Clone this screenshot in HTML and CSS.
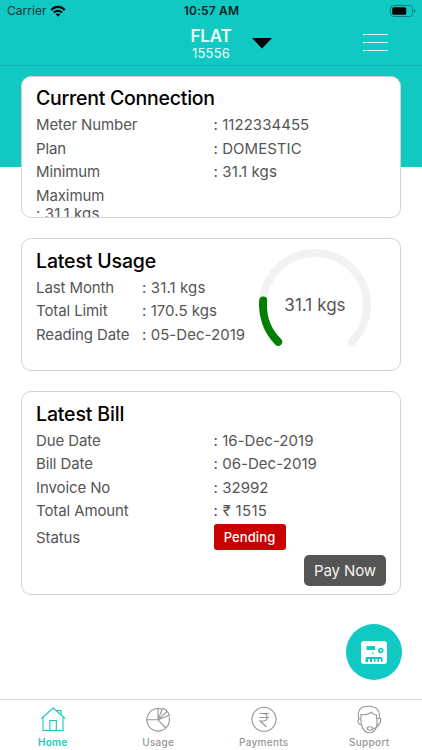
FILE: index.html
```html
<!DOCTYPE html>
<html lang="en">
<head>
<meta charset="utf-8">
<meta name="viewport" content="width=device-width">
<title>Home</title>
<link rel="stylesheet" href="styles.css">
</head>
<body>
<div class="app">
  <header class="header">
    <div class="status-bar">
      <div class="carrier"><span>Carrier</span>
        <svg width="16" height="12" viewBox="0 0 16 12"><path d="M.5 4.2C4.800-.3 11.200-.3 15.500 4.200L14 5.700C10.500 2.200 5.500 2.200 2 5.700ZM3.100 6.800C5.900 4 10.100 4 12.900 6.800L11.300 8.300C9.300 6.500 6.700 6.500 4.700 8.300ZM5.700 9.300C7 8.200 9 8.200 10.300 9.300L8 11.700Z"/></svg>
      </div>
      <span class="clock">10:57 AM</span>
      <svg class="battery" width="26" height="12" viewBox="0 0 26 12"><rect x=".5" y=".5" width="22" height="11" rx="3" fill="none" stroke="#087f7c"/><rect x="2.200" y="2.200" width="14" height="7.600" rx="1.500"/><path d="M24 4q1.300.7 1.300 2T24 8Z" fill="#087f7c"/></svg>
    </div>
    <div class="nav">
      <div class="account"><strong>FLAT</strong><span>15556</span></div>
      <svg class="caret" width="20" height="11" viewBox="0 0 20 11"><path d="M0 0H20L10 10.500Z"/></svg>
      <div class="burger"><i></i><i></i><i></i></div>
    </div>
  </header>
  <main class="content">
    <section class="card connection">
      <h2>Current Connection</h2>
      <dl>
        <div class="row"><dt>Meter Number</dt><dd>: 1122334455</dd></div>
        <div class="row"><dt>Plan</dt><dd>: DOMESTIC</dd></div>
        <div class="row"><dt>Minimum</dt><dd class="kgs">: 31.1 kgs</dd></div>
        <div class="row stacked"><dt>Maximum</dt><dd class="kgs">: 31.1 kgs</dd></div>
      </dl>
    </section>
    <section class="card usage">
      <div>
        <h2>Latest Usage</h2>
        <dl>
          <div class="row"><dt>Last Month</dt><dd class="kgs">: 31.1 kgs</dd></div>
          <div class="row"><dt>Total Limit</dt><dd>: 170.5 kgs</dd></div>
          <div class="row"><dt>Reading Date</dt><dd>: 05-Dec-2019</dd></div>
        </dl>
      </div>
      <div class="gauge">
        <svg width="112" height="112" viewBox="0 0 112 112" fill="none" stroke-width="8" stroke-linecap="round"><path d="M19.200 92.800A52 52 0 1 1 92.800 92.800" stroke="#f2f2f2"/><path d="M19.200 92.800A52 52 0 0 1 4.200 51.500" stroke="#008000"/></svg>
        <span>31.1 kgs</span>
      </div>
    </section>
    <section class="card bill">
      <h2>Latest Bill</h2>
      <dl>
        <div class="row"><dt>Due Date</dt><dd>: 16-Dec-2019</dd></div>
        <div class="row"><dt>Bill Date</dt><dd>: 06-Dec-2019</dd></div>
        <div class="row"><dt>Invoice No</dt><dd>: 32992</dd></div>
        <div class="row"><dt>Total Amount</dt><dd class="rupees">: ₹ 1515</dd></div>
        <div class="row status"><dt>Status</dt><dd class="badge">Pending</dd></div>
      </dl>
      <button class="pay">Pay Now</button>
    </section>
    <button class="fab" aria-label="Meter">
      <svg width="26" height="23" viewBox="0 0 26 23"><rect width="26" height="23" rx="3" fill="#fff"/><path d="M5.500 5h8.500v4H5.500ZM4.500 21v-3.500q0-1.500 1.500-1.500h14q1.500 0 1.500 1.500V21h-1.500v-3h-2V21h-1.500v-3h-2V21h-1.500v-3h-2V21H9v-3H7v3Z" fill="#11c9c3"/><circle cx="12" cy="12.300" r=".8" fill="#11c9c3"/><circle cx="19.800" cy="9.500" r="1.900" fill="none" stroke="#11c9c3" stroke-width="1.600"/></svg>
    </button>
  </main>
  <nav class="tabs">
    <a class="tab active">
      <svg width="28" height="28" viewBox="0 0 28 28"><path d="M4 12.500V25.500H24V12.500M2.500 13.500 14.200 3 26 13.500M18.500 6.500V5.500h3.500v4.500M10.800 25.500V15.500h6.500v10"/></svg>
      <span>Home</span>
    </a>
    <a class="tab">
      <svg width="28" height="28" viewBox="0 0 28 28"><path d="M14 3.500A11.300 11.300 0 1 0 25 11.700M14 3.500V14.800H2.700M14 14.800 21.800 23M14 14.800 18.500 3.500Q21.500 3.500 23 6.500L14 14.800 25.500 10.300Q24.500 7.500 23 6.500M14 3.500Q16.500 3.500 18.200 4.500"/></svg>
      <span>Usage</span>
    </a>
    <a class="tab">
      <svg width="28" height="28" viewBox="0 0 28 28"><circle cx="14" cy="14.300" r="12"/><path d="M9.500 8.500h9.500M9.500 12.500h9.500M9.500 8.500h3.500c5.500 0 5.500 7.500 0 7.500H10l6.500 6"/></svg>
      <span>Payments</span>
    </a>
    <a class="tab">
      <svg width="28" height="28" viewBox="0 0 28 28"><path d="M4 14.500C1.500 5 6 1 13.500 1.200S26 5 24 13.500M6.500 20C9.500 30.500 19.500 30.500 22 20M6 13.500v-4C10 10 14 9.500 16.500 7.200c1 1.500 3 2.300 5 2.800v3.500M5.500 13.500q-3 0-2.500 3T6.500 20ZM22 13.500v6h1.500l2-2v-4ZM24 19.500c-.5 2.800-3 3.500-6 4"/><ellipse cx="15" cy="23.500" rx="2.700" ry="1.700"/></svg>
      <span>Support</span>
    </a>
  </nav>
</div>
</body>
</html>
```
FILE: styles.css
```css
* { box-sizing: border-box; }
body { margin: 0; font-family: Inter, "Liberation Sans", sans-serif; background: #fff; }
h2, dl, dd { margin: 0; }
button { border: 0; padding: 0; font: inherit; }
svg { display: block; flex: none; }
.app { width: 422px; height: 750px; display: flex; flex-direction: column; overflow: hidden; background: linear-gradient(#11c9c3 167px, #fff 167px); }
.header { height: 66px; flex: none; border-bottom: 1px solid #10b5b0; }
.status-bar { height: 22px; display: grid; grid-template-columns: 1fr auto 1fr; align-items: center; padding: 0 6px 0 7px; font-size: 12px; line-height: 22px; color: #073633; }
.carrier { display: flex; gap: 4px; align-items: center; letter-spacing: .02px; }
.carrier svg { fill: #000; margin-top: -1px; }
.clock { font-weight: 600; letter-spacing: .15px; color: #031f1d; }
.battery { justify-self: end; margin-top: -1px; }
.nav { position: relative; height: 43px; display: grid; grid-template-columns: 1fr 62px 1fr; align-items: start; color: #e9fffd; }
.account { grid-column: 2; display: flex; flex-direction: column; align-items: center; padding-top: 4px; }
.account strong { font-size: 17px; font-weight: 600; line-height: 20px; letter-spacing: -.2px; }
.account span { font-size: 13px; line-height: 14px; letter-spacing: .2px; }
.caret { position: absolute; left: 252px; top: 16px; }
.burger { justify-self: end; width: 25px; margin: 12px 34px 0 0; display: flex; flex-direction: column; gap: 7px; }
.burger i { height: 1px; background: #dffaf8; }
.content { position: relative; flex: 1; padding: 10px 21px 0; }
.card { border: 1px solid #d2d2d2; border-radius: 10px; background: #fff; padding: 9px 14px; overflow: hidden; color: #555; font-size: 15px; letter-spacing: -.1px; }
.card h2 { color: #000; font-size: 19.500px; font-weight: 500; line-height: 25px; letter-spacing: -.25px; }
.card dd { letter-spacing: .05px; }
.card dd.kgs { letter-spacing: .12px; }
.card dd.rupees { letter-spacing: .3px; }
.connection { height: 142px; }
.usage { height: 133px; margin-top: 20px; padding-top: 10px; display: flex; justify-content: space-between; }
.bill { height: 204px; margin-top: 20px; padding-top: 10px; display: flex; flex-direction: column; }
.usage h2, .bill h2 { line-height: 24.500px; letter-spacing: -.15px; }
.row { display: grid; grid-template-columns: 177.500px 1fr; height: 23.500px; line-height: 27px; white-space: nowrap; }
.usage .row { grid-template-columns: 106px auto; }
.row.stacked { display: block; }
.row.stacked dd { line-height: 18px; margin-top: -4px; }
.row.status { height: 33px; align-items: center; }
.card .badge { width: 72px; height: 26px; line-height: 26px; text-align: center; border-radius: 3px; background: #c90000; color: #fff; font-size: 13px; font-weight: 500; letter-spacing: .1px; }
.pay { align-self: flex-end; width: 82px; height: 31px; margin-top: 1px; border-radius: 5px; background: #555; color: #f4f4f4; font-size: 15px; line-height: 31px; letter-spacing: -.1px; }
.gauge { width: 112px; height: 112px; margin: 0 15px 0 0; display: grid; flex: none; }
.gauge > * { grid-area: 1 / 1; }
.gauge span { place-self: center; font-size: 17px; letter-spacing: .05px; }
.fab { position: absolute; left: 346px; top: 558px; width: 56px; height: 56px; border-radius: 50%; display: grid; place-items: center; background: #11c9c3; }
.tabs { height: 51px; flex: none; display: grid; grid-template-columns: repeat(4, 1fr); border-top: 1px solid #d8d8d8; background: #fff; }
.tab { display: flex; flex-direction: column; align-items: center; padding-top: 5px; color: #969696; font-size: 10px; font-weight: 500; line-height: 12px; letter-spacing: .3px; }
.tab svg { fill: none; stroke: currentColor; stroke-width: 1.1; margin-bottom: 3px; }
.tab.active { color: #11c9bd; font-weight: 600; letter-spacing: .2px; }
```
